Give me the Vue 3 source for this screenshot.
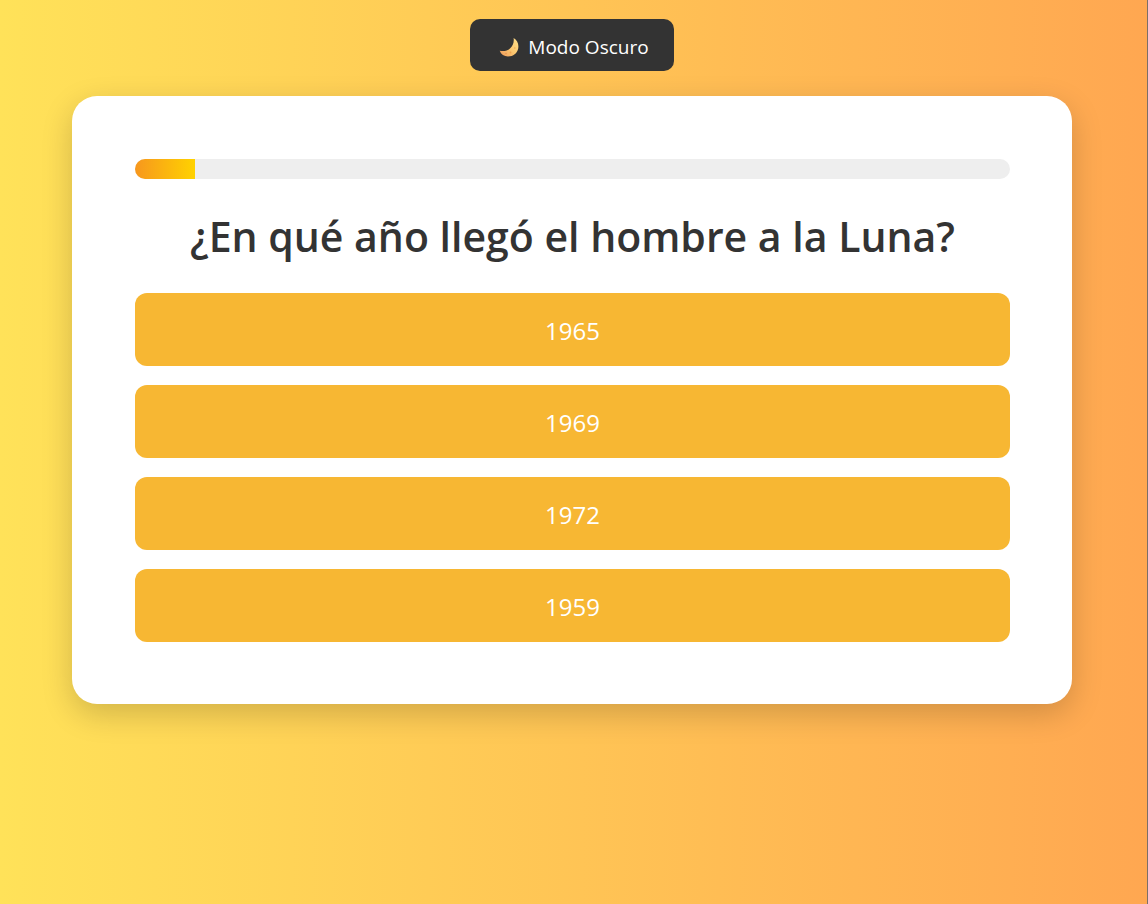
<script setup>
import { ref, computed } from 'vue'

const question = '¿En qué año llegó el hombre a la Luna?'
const options = ['1965', '1969', '1972', '1959']
const progress = ref(6.86)
const progressWidth = computed(() => `${progress.value}%`)
</script>

<template>
  <div class="page">
    <button class="theme-toggle" type="button">
      <svg class="moon" viewBox="0 0 20 20" aria-hidden="true">
        <defs>
          <linearGradient id="moon-fill" x1="1" y1="0" x2="0" y2="1">
            <stop offset="0" stop-color="#ffe08a" />
            <stop offset="0.5" stop-color="#fbc870" />
            <stop offset="1" stop-color="#ef9a5c" />
          </linearGradient>
        </defs>
        <path
          d="M14.600 1C18.200 3 20 7 19.200 11.400C18.200 16.300 14 19.500 9 19.400C5.200 19.300 2 17.300 0.700 13.700C4.400 14.700 8.300 13.900 11 11.500C13.900 9 15.300 5.200 14.600 1Z"
          fill="url(#moon-fill)"
        />
        <circle cx="15.800" cy="11" r="0.800" fill="#f0a750" />
        <circle cx="11.500" cy="15.500" r="0.900" fill="#f0a34f" />
        <circle cx="7" cy="16.500" r="0.700" fill="#e58f4b" />
      </svg>
      <span>Modo Oscuro</span>
    </button>

    <main class="card">
      <div
        class="progress"
        role="progressbar"
        aria-label="Progreso"
        aria-valuemin="0"
        aria-valuemax="100"
        :aria-valuenow="progress"
      >
        <div class="progress-fill" :style="{ width: progressWidth }"></div>
      </div>
      <h1 class="question">{{ question }}</h1>
      <div class="options">
        <button v-for="option in options" :key="option" class="option" type="button">
          {{ option }}
        </button>
      </div>
    </main>
  </div>
</template>

<style>
body {
  margin: 0;
}
</style>

<style scoped>
.page {
  box-sizing: border-box;
  min-height: 100vh;
  padding: 19px 23px 24px 20px;
  border-right: 1px solid #7b6f68;
  display: flex;
  flex-direction: column;
  align-items: center;
  gap: 25px;
  background: linear-gradient(to right, #ffe259, #ffa751);
  font-family: "Segoe UI", "Open Sans", "Noto Sans", sans-serif;
  color: #333;
}

.theme-toggle {
  display: flex;
  align-items: center;
  gap: 9px;
  height: 52px;
  padding: 4px 25px 0 29px;
  border: 0;
  border-radius: 10px;
  background: #333;
  color: #fff;
  font-family: inherit;
  font-size: 19px;
  line-height: 26px;
  cursor: pointer;
}

.moon {
  width: 20px;
  height: 20px;
}

.card {
  box-sizing: border-box;
  width: 100%;
  max-width: 1000px;
  padding: 63px 62px 62px 63px;
  border-radius: 25px;
  background: #fff;
  box-shadow: 0 10px 31px rgba(0, 0, 0, 0.18);
}

.progress {
  height: 20px;
  border-radius: 10px;
  overflow: hidden;
  background: #eee;
}

.progress-fill {
  height: 100%;
  background: linear-gradient(to right, #f7971e, #ffd200);
}

.question {
  margin: 26px 0;
  font-size: 41px;
  font-weight: 600;
  line-height: 62px;
  text-align: center;
}

.options {
  display: flex;
  flex-direction: column;
  gap: 19px;
}

.option {
  height: 73px;
  padding: 2px 20px 0;
  border: 0;
  border-radius: 12px;
  background: #f7b733;
  color: #fff;
  font-family: inherit;
  font-size: 24px;
  line-height: 32px;
  cursor: pointer;
}
</style>
